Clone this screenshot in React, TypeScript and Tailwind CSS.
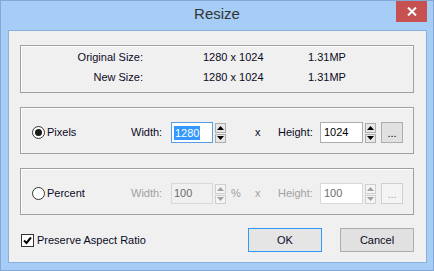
import React from "react";

const font = { fontFamily: '"Liberation Sans", Arial, sans-serif' };

function Spin({ disabled }: { disabled?: boolean }) {
  const b = disabled ? "border-[#cfcfcf] bg-[#f4f4f4]" : "border-[#acacac] bg-[#e8e8e8]";
  const f = disabled ? "#a0a0a0" : "#000";
  return (
    <div className="flex flex-col gap-[1px] w-[11px] h-[20px] ml-[2px] mt-[1px]">
      <div className={`flex-1 border ${b} flex items-center justify-center`}>
        <svg width="7" height="4" viewBox="0 0 7 4">
          <polygon points="0,4 3.5,0 7,4" fill={f} />
        </svg>
      </div>
      <div className={`flex-1 border ${b} flex items-center justify-center`}>
        <svg width="7" height="4" viewBox="0 0 7 4">
          <polygon points="0,0 3.5,4 7,0" fill={f} />
        </svg>
      </div>
    </div>
  );
}

function Radio({ checked }: { checked?: boolean }) {
  return (
    <div className="w-[13px] h-[13px] rounded-full border border-[#333] bg-white flex items-center justify-center">
      {checked && <div className="w-[7px] h-[7px] rounded-full bg-[#1a1a1a]" />}
    </div>
  );
}

function Row({ disabled }: { disabled?: boolean }) {
  const lbl = disabled ? "text-[#a0a0a0]" : "text-[#0a0a1e]";
  const inpBorder = disabled ? "border-[#d9d9d9]" : "border-[#abadb3]";
  return (
    <div className="flex items-start pl-[11px] pt-[14px]">
      <div className="w-[99px] h-[21px] flex items-center">
        <Radio checked={!disabled} />
        <span className="ml-[2px] text-[#0a0a1e]">{disabled ? "Percent" : "Pixels"}</span>
      </div>
      <div className={`w-[40px] h-[21px] flex items-center ${lbl}`}>Width:</div>
      <div
        className={`w-[42px] h-[21px] border flex items-center pl-[2px] ${
          disabled ? "border-[#d9d9d9] bg-[#f0f0f0] text-[#6d6d6d]" : "border-[#569de5] bg-white"
        }`}
      >
        {disabled ? (
          <span>100</span>
        ) : (
          <span className="bg-[#3399ff] text-white px-[1px] leading-[14px]">1280</span>
        )}
      </div>
      <Spin disabled={disabled} />
      <div className={`w-[29px] h-[21px] flex items-center pl-[5px] ${lbl}`}>{disabled ? "%" : ""}</div>
      <div className={`w-[23px] h-[21px] flex items-center ${lbl}`}>x</div>
      <div className={`w-[42px] h-[21px] flex items-center ${lbl}`}>Height:</div>
      <div
        className={`w-[43px] h-[21px] border ${inpBorder} bg-white flex items-center pl-[3px] ${
          disabled ? "text-[#6d6d6d]" : "text-black"
        }`}
      >
        {disabled ? "100" : "1024"}
      </div>
      <Spin disabled={disabled} />
      <div
        className={`ml-[5px] w-[22px] h-[21px] border flex items-end justify-center pb-[3px] leading-none ${
          disabled ? "border-[#cfcfcf] bg-[#f4f4f4] text-[#a0a0a0]" : "border-[#adadad] bg-[#e1e1e1] text-black"
        }`}
      >
        ...
      </div>
    </div>
  );
}

export default function App() {
  return (
    <div
      className="w-[434px] h-[271px] bg-[#a6cdf6] border border-[#83a8d6] flex flex-col text-[11px] text-[#0a0a1e] overflow-hidden"
      style={font}
    >
      <div className="h-[29px] shrink-0 relative flex items-center justify-center">
        <span className="text-[15px] text-[#333] -mt-[2px]">Resize</span>
        <div className="absolute right-[6px] top-0 w-[31px] h-[21px] bg-[#c75050] flex items-center justify-center">
          <svg width="10" height="9" viewBox="0 0 10 9">
            <path d="M1 0.5 L9 8.5 M9 0.5 L1 8.5" stroke="#fff" strokeWidth="2" />
          </svg>
        </div>
      </div>
      <div className="flex-1 ml-[7px] mr-[6px] mb-[7px] border border-[#8aafdc] bg-[#f0f0f0] flex flex-col pl-[11px] pr-[12px] pt-[14px]">
        <div className="h-[48px] border border-[#a0a0a0] shadow-[inset_1px_1px_0_#fff] pt-[1px]">
          <div className="flex h-[20px] items-center">
            <div className="w-[122px] text-right">Original Size:</div>
            <div className="w-[105px] ml-[60px]">1280 x 1024</div>
            <div>1.31MP</div>
          </div>
          <div className="flex h-[20px] items-center">
            <div className="w-[122px] text-right">New Size:</div>
            <div className="w-[105px] ml-[60px]">1280 x 1024</div>
            <div>1.31MP</div>
          </div>
        </div>
        <div className="mt-[14px] h-[47px] border border-[#a0a0a0] shadow-[inset_1px_1px_0_#fff]">
          <Row />
        </div>
        <div className="mt-[14px] h-[47px] border border-[#a0a0a0] shadow-[inset_1px_1px_0_#fff]">
          <Row disabled />
        </div>
        <div className="mt-[13px] flex items-center">
          <div className="flex items-center ml-[1px] flex-1">
            <div className="w-[13px] h-[13px] border border-[#333] bg-white flex items-center justify-center">
              <svg width="9" height="9" viewBox="0 0 9 9">
                <path d="M1 4.5 L3.5 7 L8 1.5" stroke="#000" strokeWidth="2" fill="none" />
              </svg>
            </div>
            <span className="ml-[3px]">Preserve Aspect Ratio</span>
          </div>
          <div className="w-[74px] h-[24px] border border-[#3399ff] bg-[#e5e5e5] flex items-center justify-center">
            OK
          </div>
          <div className="ml-[18px] w-[74px] h-[24px] border border-[#adadad] bg-[#e1e1e1] flex items-center justify-center">
            Cancel
          </div>
        </div>
      </div>
    </div>
  );
}
